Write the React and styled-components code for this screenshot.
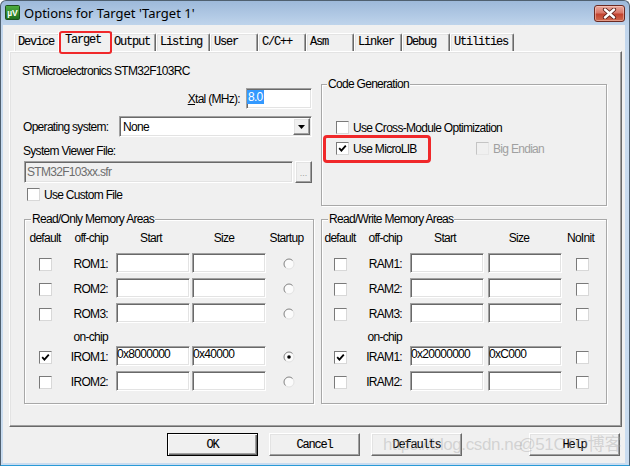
import React from 'react';
import styled, { createGlobalStyle, css } from 'styled-components';

const UI_FONT = `"Liberation Sans", Arial, sans-serif`;
const MONO_FONT = `"Liberation Mono", "Courier New", monospace`;

const GlobalStyle = createGlobalStyle`
  html, body { margin: 0; padding: 0; }
  body {
    width: 630px; height: 466px; overflow: hidden; background: #fff;
    font-family: ${UI_FONT};
  }
  *, *::before, *::after { box-sizing: border-box; }
`;

const Window = styled.div`
  position: relative;
  width: 630px;
  height: 466px;
  display: flex;
  flex-direction: column;
  background: linear-gradient(180deg, #9db9da 0px, #c0d5ec 25px, #c8dbef 80px, #c9dcf0 100%);
  border: 1px solid #4f6070;
  border-bottom-color: #2a9ad6;
  border-radius: 6px 6px 0 0;
  overflow: hidden;
`;

const TitleBar = styled.div`
  height: 24px;
  flex: none;
  display: flex;
  align-items: flex-start;
  padding: 4px 4px 0 4px;
`;

const IconBox = styled.svg`
  flex: none;
  width: 15px;
  height: 15px;
`;

const Title = styled.span`
  margin-left: 4px;
  font-family: "Noto Sans", "Open Sans", sans-serif;
  font-size: 13px;
  line-height: 18px;
  margin-top: -1px;
  color: #000;
  white-space: nowrap;
`;

const CloseButton = styled.div`
  margin-left: auto;
  width: 31px;
  height: 17px;
  border: 1px solid #6b2a22;
  border-radius: 3px;
  background: linear-gradient(180deg, #e9a99c 0%, #d9786a 45%, #c2432f 55%, #cf6a4f 100%);
  box-shadow: inset 0 0 0 1px rgba(255, 220, 210, 0.45);
  display: flex;
  align-items: center;
  justify-content: center;
`;

const Client = styled.div`
  flex: 1;
  margin: 0 4px 2px 2px;
  background: #f0f0f0;
  display: flex;
  flex-direction: column;
`;

const TabStrip = styled.div`
  display: flex;
  align-items: flex-end;
  height: 20px;
  margin-top: 6px;
  padding-left: 11px;
`;

const monoText = css`
  font-family: ${MONO_FONT};
  font-size: 12px;
  letter-spacing: -1.2px;
  -webkit-text-stroke: 0.1px #000;
  color: #000;
`;

const Tab = styled.div`
  position: relative;
  flex: none;
  width: ${p => (p.$active ? p.$w + 4 : p.$w)}px;
  height: ${p => (p.$active ? 21 : 18)}px;
  margin: ${p => (p.$active ? '0 -2px -1px -2px' : '0')};
  padding-left: ${p => (p.$active ? 6 : 3)}px;
  z-index: ${p => (p.$active ? 2 : 1)};
  background: #f0f0f0;
  border-top: 1px solid #fff;
  border-left: 1px solid #fff;
  border-right: 1px solid #696969;
  box-shadow: inset -1px 0 0 #a0a0a0, inset 1px 1px 0 #e3e3e3;
  border-radius: 2px 2px 0 0;
  ${monoText};
  line-height: 16px;
  white-space: nowrap;
`;

const TabHighlight = styled.span`
  position: absolute;
  left: 0px;
  top: -1px;
  width: 53px;
  height: 23px;
  border: 2px solid #f0282a;
  border-radius: 3px;
`;

const Panel = styled.div`
  margin-left: 6px;
  width: 613px;
  height: 376px;
  border: 1px solid;
  border-color: #fff #696969 #696969 #fff;
  box-shadow: inset -1px -1px 0 #a0a0a0, inset 1px 1px 0 #e3e3e3;
  display: grid;
  grid-template-columns: 290px 286px;
  grid-template-rows: 142px 185px;
  column-gap: 7px;
  row-gap: 13px;
  padding: 12px 14px 0 14px;
  font-size: 12px;
  letter-spacing: -0.7px;
  color: #000;
`;

const SetupColumn = styled.div`
  display: flex;
  flex-direction: column;
`;

const Text = styled.span`
  line-height: 14px;
  white-space: nowrap;
  color: ${p => (p.$disabled ? '#a0a0a0' : '#000')};
`;

const DeviceName = styled(Text)`
  margin-left: -2px;
`;

const XtalRow = styled.div`
  display: flex;
  justify-content: flex-end;
  align-items: center;
  gap: 6px;
  margin-top: 10px;
  padding-right: 2px;
`;

const OsRow = styled.div`
  display: flex;
  align-items: center;
  margin-top: 7px;
`;

const OsLabel = styled(Text)`
  width: 96px;
  margin-left: -1px;
`;

const SvfLabel = styled(Text)`
  margin-top: 7px;
  margin-left: -1px;
`;

const SvfRow = styled.div`
  display: flex;
  margin-top: 3px;
  gap: 2px;
`;

const CustomRow = styled.div`
  margin-top: 5px;
  padding-left: 3px;
`;

const sunken = css`
  border: 1px solid;
  border-color: #a0a0a0 #fff #fff #a0a0a0;
  box-shadow: inset 1px 1px 0 #696969, inset -1px -1px 0 #e3e3e3;
`;

const raised = css`
  border: 1px solid;
  border-color: #fff #696969 #696969 #fff;
  box-shadow: inset -1px -1px 0 #a0a0a0, inset 1px 1px 0 #e3e3e3;
  background: #f0f0f0;
`;

const Field = styled.div`
  ${sunken};
  flex: none;
  width: ${p => p.$w}px;
  height: ${p => p.$h}px;
  margin-left: ${p => p.$ml || 0}px;
  padding: ${p => p.$pt || 0}px 0 0 ${p => p.$pl || 0}px;
  background: ${p => (p.$disabled ? '#f0f0f0' : '#fff')};
  color: ${p => (p.$disabled ? '#6d6d6d' : '#000')};
  line-height: 14px;
  white-space: nowrap;
  overflow: hidden;
  align-self: center;
`;

const Selected = styled.span`
  display: inline-block;
  background: #3399ff;
  color: #fff;
  padding: 0 1px 0 1px;
`;

const Select = styled.div`
  ${sunken};
  width: 193px;
  height: 21px;
  background: #fff;
  display: flex;
  align-items: center;
  padding: 0 1px 0 3px;
  line-height: 14px;
`;

const DropButton = styled.div`
  ${raised};
  margin-left: auto;
  width: 17px;
  height: 17px;
  display: flex;
  align-items: center;
  justify-content: center;
`;

const BrowseButton = styled.div`
  ${raised};
  width: 17px;
  height: 22px;
  display: flex;
  justify-content: center;
  align-items: flex-end;
  padding-bottom: 4px;
  font-size: 9px;
  letter-spacing: 0;
  line-height: 9px;
  color: #a0a0a0;
`;

const CheckItem = styled.label`
  position: relative;
  display: flex;
  align-items: center;
  gap: 4px;
  height: 13px;
`;

const BoxWrap = styled.span`
  flex: none;
  width: 13px;
  height: 13px;
  display: inline-flex;
  align-items: center;
  justify-content: center;
  border: 1px solid;
  border-color: ${p => (p.$disabled ? '#c4c4c4 #e6e6e6 #e6e6e6 #c4c4c4' : '#7a7a7a #d8d8d8 #d8d8d8 #7a7a7a')};
  background: ${p => (p.$disabled ? '#f0f0f0' : '#fff')};
`;

const OptionHighlight = styled.span`
  position: absolute;
  left: -13px;
  top: -7px;
  width: 108px;
  height: 28px;
  border: 3px solid #f0282a;
  border-radius: 4px;
`;

function CheckBox({ checked, disabled }) {
  return (
    <BoxWrap $disabled={disabled}>
      {checked && (
        <svg width="9" height="9" viewBox="0 0 9 9">
          <polyline points="1.2,4.2 3.4,6.6 7.8,1.6" fill="none" stroke="#000" strokeWidth="1.8" />
        </svg>
      )}
    </BoxWrap>
  );
}

function Radio({ checked }) {
  return (
    <svg width="12" height="12" viewBox="0 0 12 12">
      <circle cx="6" cy="6" r="5" fill="#fbfbfb" stroke="#e2e2e2" />
      <path d="M2.46 9.54 A5 5 0 0 1 9.54 2.46" fill="none" stroke="#8a8a8a" />
      {checked && <circle cx="6" cy="6" r="1.8" fill="#000" />}
    </svg>
  );
}

const Group = styled.div`
  position: relative;
  border: 1px solid #a8a8a8;
  box-shadow: inset 1px 1px 0 #fff, 1px 1px 0 #fff;
`;

const Legend = styled.span`
  position: absolute;
  top: -8px;
  left: ${p => p.$left}px;
  padding: 0 1px;
  background: #f0f0f0;
  line-height: 14px;
  white-space: nowrap;
`;

const CodeGenBox = styled(Group)`
  margin-top: 20px;
  height: 122px;
  display: grid;
  grid-template-columns: 140px auto;
  grid-template-rows: 13px 13px;
  row-gap: 8px;
  align-content: start;
  padding: 36px 0 0 14px;
`;

const MemGrid = styled(Group)`
  display: grid;
  grid-template-columns: ${p => p.$cols};
  grid-template-rows: 17px 20px 20px 20px 13px 20px 20px;
  row-gap: 5px;
  padding-top: 11px;
`;

const Head = styled.span`
  align-self: start;
  justify-self: ${p => p.$align || 'center'};
  padding-right: ${p => p.$pr || 0}px;
  line-height: 14px;
  white-space: nowrap;
`;

const RowLabel = styled.span`
  align-self: center;
  justify-self: end;
  padding-right: 4px;
  padding-top: 2px;
  line-height: 14px;
  white-space: nowrap;
`;

const OnChip = styled(RowLabel)`
  align-self: start;
  padding-top: 2px;
`;

const Cell = styled.span`
  align-self: center;
  justify-self: ${p => p.$justify || 'center'};
  display: flex;
  padding-right: ${p => p.$pr || 0}px;
  padding-top: ${p => p.$pt || 0}px;
`;

const ButtonRow = styled.div`
  display: flex;
  margin-top: 6px;
  margin-left: 6px;
  width: 613px;
  padding: 0 2px 0 158px;
  gap: 11px;
`;

const DlgButton = styled.div`
  ${raised};
  width: 91px;
  height: 23px;
  margin-left: ${p => (p.$push ? 'auto' : '0')};
  display: flex;
  align-items: center;
  justify-content: center;
  ${monoText};
  ${p => p.$default && css`
    border: 1px solid #000;
    box-shadow: inset 1px 1px 0 #fff, inset -1px -1px 0 #696969, inset -2px -2px 0 #a0a0a0;
  `}
`;

const Watermark = styled.div`
  position: absolute;
  top: 434px;
  left: 382px;
  display: flex;
  font-family: "Liberation Sans", "Noto Sans CJK SC", sans-serif;
  font-size: 17px;
  line-height: 20px;
  letter-spacing: -0.4px;
  color: rgba(165, 165, 165, 0.4);
  white-space: nowrap;
  pointer-events: none;
`;

const WatermarkTail = styled.span`
  margin-left: -4px;
`;

const TABS = [
  { label: 'Device', w: 46 },
  { label: 'Target', w: 50, active: true },
  { label: 'Output', w: 46 },
  { label: 'Listing', w: 54 },
  { label: 'User', w: 48 },
  { label: 'C/C++', w: 48 },
  { label: 'Asm', w: 48 },
  { label: 'Linker', w: 48 },
  { label: 'Debug', w: 48 },
  { label: 'Utilities', w: 64 },
];

const ROM_ROWS = [
  { label: 'ROM1:' },
  { label: 'ROM2:' },
  { label: 'ROM3:' },
  { onChip: true },
  { label: 'IROM1:', def: true, start: '0x8000000', size: '0x40000', flag: true },
  { label: 'IROM2:' },
];

const RAM_ROWS = [
  { label: 'RAM1:' },
  { label: 'RAM2:' },
  { label: 'RAM3:' },
  { onChip: true },
  { label: 'IRAM1:', def: true, start: '0x20000000', size: '0xC000' },
  { label: 'IRAM2:' },
];

function MemoryArea({ legend, legendLeft, cols, lastHead, sizeMl, rows, radio }) {
  return (
    <MemGrid $cols={cols}>
      <Legend $left={legendLeft}>{legend}</Legend>
      <Head>default</Head>
      <Head $align="end" $pr={4}>off-chip</Head>
      <Head>Start</Head>
      <Head $pr={8}>Size</Head>
      <Head $pr={radio ? 6 : 3}>{lastHead}</Head>
      {rows.map((r, i) =>
        r.onChip ? (
          <React.Fragment key={i}>
            <span />
            <OnChip>on-chip</OnChip>
            <span />
            <span />
            <span />
          </React.Fragment>
        ) : (
          <React.Fragment key={i}>
            <Cell $pt={2}><CheckBox checked={r.def} /></Cell>
            <RowLabel>{r.label}</RowLabel>
            <Cell $justify="start"><Field $w={74} $h={20} $ml={4}>{r.start || ''}</Field></Cell>
            <Cell $justify="start"><Field $w={74} $h={20} $ml={sizeMl}>{r.size || ''}</Field></Cell>
            <Cell $pr={radio ? 2 : 0} $pt={2}>{radio ? <Radio checked={r.flag} /> : <CheckBox />}</Cell>
          </React.Fragment>
        )
      )}
    </MemGrid>
  );
}

function KeilIcon() {
  return (
    <IconBox viewBox="0 0 15 15">
      <defs>
        <linearGradient id="kg" x1="0" y1="0" x2="0" y2="1">
          <stop offset="0" stopColor="#4fae3f" />
          <stop offset="1" stopColor="#1f6e1f" />
        </linearGradient>
      </defs>
      <rect x="0.5" y="0.5" width="14" height="14" rx="1" fill="url(#kg)" stroke="#1d4f1d" />
      <text x="7.5" y="11" textAnchor="middle" fontFamily="Liberation Sans, sans-serif" fontWeight="bold" fontSize="8.5" fill="#fff">µV</text>
    </IconBox>
  );
}

function CloseGlyph() {
  return (
    <svg width="15" height="11" viewBox="0 0 15 11">
      <path d="M3 1.5 L12 9.5 M12 1.5 L3 9.5" stroke="#5a2018" strokeWidth="4.2" strokeLinecap="round" />
      <path d="M3 1.5 L12 9.5 M12 1.5 L3 9.5" stroke="#fff" strokeWidth="2.4" strokeLinecap="round" />
    </svg>
  );
}

export default function App() {
  return (
    <>
      <GlobalStyle />
      <Window>
        <TitleBar>
          <KeilIcon />
          <Title>Options for Target 'Target 1'</Title>
          <CloseButton>
            <CloseGlyph />
          </CloseButton>
        </TitleBar>
        <Client>
          <TabStrip>
            {TABS.map(t => (
              <Tab key={t.label} $w={t.w} $active={t.active}>
                {t.label}
                {t.active && <TabHighlight />}
              </Tab>
            ))}
          </TabStrip>
          <Panel>
            <SetupColumn>
              <DeviceName>STMicroelectronics STM32F103RC</DeviceName>
              <XtalRow>
                <Text><u>X</u>tal (MHz):</Text>
                <Field $w={66} $h={21} $pt={1} $pl={0}>
                  <Selected>8.0</Selected>
                </Field>
              </XtalRow>
              <OsRow>
                <OsLabel>Operating system:</OsLabel>
                <Select>
                  <Text>None</Text>
                  <DropButton>
                    <svg width="7" height="4" viewBox="0 0 7 4">
                      <path d="M0 0 H7 L3.5 4 Z" fill="#000" />
                    </svg>
                  </DropButton>
                </Select>
              </OsRow>
              <SvfLabel>System Viewer File:</SvfLabel>
              <SvfRow>
                <Field $w={269} $h={22} $pt={3} $pl={2} $disabled>STM32F103xx.sfr</Field>
                <BrowseButton>...</BrowseButton>
              </SvfRow>
              <CustomRow>
                <CheckItem>
                  <CheckBox />
                  <Text>Use Custom File</Text>
                </CheckItem>
              </CustomRow>
            </SetupColumn>

            <CodeGenBox>
              <Legend $left={5}>Code Generation</Legend>
              <CheckItem>
                <CheckBox />
                <Text>Use Cross-Module Optimization</Text>
              </CheckItem>
              <span />
              <CheckItem>
                <CheckBox checked />
                <Text>Use MicroLIB</Text>
                <OptionHighlight />
              </CheckItem>
              <CheckItem>
                <CheckBox disabled />
                <Text $disabled>Big Endian</Text>
              </CheckItem>
            </CodeGenBox>

            <MemoryArea
              legend="Read/Only Memory Areas"
              legendLeft={6}
              cols="40px 47px 78px 76px 1fr"
              lastHead="Startup"
              sizeMl={2}
              rows={ROM_ROWS}
              radio
            />
            <MemoryArea
              legend="Read/Write Memory Areas"
              legendLeft={6}
              cols="36px 48px 78px 78px 40px"
              lastHead="NoInit"
              sizeMl={4}
              rows={RAM_ROWS}
            />
          </Panel>
          <ButtonRow>
            <DlgButton $default>OK</DlgButton>
            <DlgButton>Cancel</DlgButton>
            <DlgButton>Defaults</DlgButton>
            <DlgButton $push>Help</DlgButton>
          </ButtonRow>
        </Client>
        <Watermark>
          https://blog.csdn.ne
          <WatermarkTail>@51CTO博客</WatermarkTail>
        </Watermark>
      </Window>
    </>
  );
}
